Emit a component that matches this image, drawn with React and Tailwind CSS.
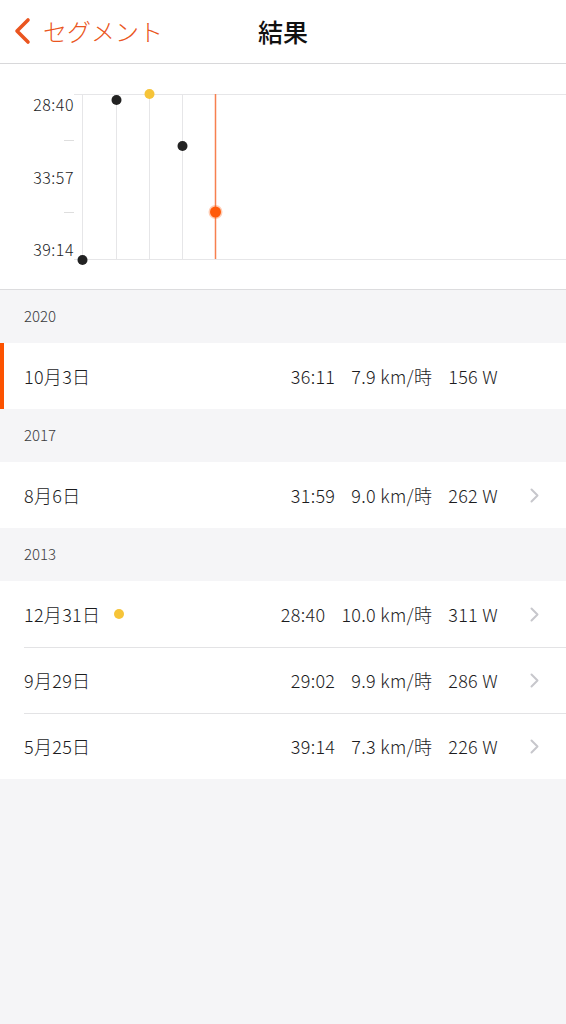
import React from 'react';

const FONT_STACK = '"Noto Sans CJK JP", "Noto Sans", sans-serif';
const FONT = { fontFamily: FONT_STACK };

const sections = [
    {
        year: '2020',
        rows: [{ date: '10月3日', time: '36:11', speed: '7.9 km/時', power: '156 W', current: true }],
    },
    {
        year: '2017',
        rows: [{ date: '8月6日', time: '31:59', speed: '9.0 km/時', power: '262 W' }],
    },
    {
        year: '2013',
        rows: [
            { date: '12月31日', time: '28:40', speed: '10.0 km/時', power: '311 W', best: true },
            { date: '9月29日', time: '29:02', speed: '9.9 km/時', power: '286 W' },
            { date: '5月25日', time: '39:14', speed: '7.3 km/時', power: '226 W' },
        ],
    },
];

// chart points, oldest first
const points = [
    { x: 82, y: 196, color: '#222222' },
    { x: 116, y: 36, color: '#222222' },
    { x: 149, y: 30, color: '#f6c438' },
    { x: 182, y: 82, color: '#222222' },
];

const Chart = () => (
    <div className="bg-white border-b border-[#dcdcde]">
        <svg width="566" height="225" viewBox="0 0 566 225" className="block">
            {/* grid */}
            <rect x="74" y="30" width="492" height="1" fill="#e6e6e8" />
            <rect x="74" y="195" width="492" height="1" fill="#e6e6e8" />
            <rect x="64" y="76" width="10" height="1" fill="#dedede" />
            <rect x="64" y="148" width="10" height="1" fill="#dedede" />
            {[82, 116, 149, 182].map(x => (
                <rect key={x} x={x} y="30" width="1" height="165" fill="#e6e6e8" />
            ))}
            <rect x="214.75" y="30" width="1.5" height="165" fill="#f7804f" />

            {/* labels */}
            {[
                ['28:40', 40],
                ['33:57', 113],
                ['39:14', 185],
            ].map(([label, y]) => (
                <text
                    key={label}
                    x="74"
                    y={y}
                    fontFamily={FONT_STACK}
                    fontSize="16"
                    fontWeight="300"
                    letterSpacing="0.5"
                    fill="#1c1c1e"
                    textAnchor="end"
                    dominantBaseline="central"
                >
                    {label}
                </text>
            ))}

            {/* dots */}
            {points.map(p => (
                <circle key={p.x} cx={p.x + 0.5} cy={p.y} r="5" fill={p.color} />
            ))}
            <circle cx="215.5" cy="148" r="7" fill="#ff5a0a" opacity="0.3" />
            <circle cx="215.5" cy="148" r="5.5" fill="#ff5a0a" />
        </svg>
    </div>
);

const Chevron = () => (
    <svg width="9" height="15" viewBox="0 0 9 15">
        <path d="M1.5 1.5 L7.5 7.5 L1.5 13.5" fill="none" stroke="#c7c7cc" strokeWidth="2" strokeLinecap="round" strokeLinejoin="round" />
    </svg>
);

const Row = ({ row, divider }) => (
    <div className="relative bg-white h-[66px] flex items-center pl-6 pr-[27px]">
        {row.current && <div className="absolute left-0 top-0 bottom-0 w-1 bg-[#fc5200]" />}
        {divider && <div className="absolute left-6 right-0 top-0 h-px bg-[#e3e3e5]" />}
        <div className="flex items-center text-[18px] font-light tracking-[0.3px] text-[#1c1c1e]">
            {row.date}
            {row.best && <span className="ml-[14px] w-[10px] h-[10px] rounded-full bg-[#f6c438]" />}
        </div>
        <div className="flex-1 flex justify-end items-center gap-4 text-[18px] font-light tracking-[0.3px] text-[#1c1c1e]">
            <span>{row.time}</span>
            <span>{row.speed}</span>
            <span>{row.power}</span>
        </div>
        <div className="w-[41px] flex justify-end">
            {!row.current && <Chevron />}
        </div>
    </div>
);

export default function App() {
    return (
        <div className="min-h-[1024px] bg-[#f5f5f7]" style={FONT}>
            {/* Nav bar */}
            <div className="relative h-16 bg-white border-b border-[#d8d8da] flex items-center">
                <div className="flex items-center pl-[13px] pb-[1px] text-[#ea5520]">
                    <svg width="20" height="28" viewBox="0 0 20 28">
                        <path d="M15 3 L4 14 L15 25" fill="none" stroke="#ea5520" strokeWidth="3.6" strokeLinecap="round" strokeLinejoin="round" />
                    </svg>
                    <span className="ml-[10px] text-[24px] font-light leading-none">セグメント</span>
                </div>
                <div className="absolute inset-0 flex items-center justify-center pb-[1px] pointer-events-none">
                    <span className="text-[25px] font-medium text-[#111111] leading-none">結果</span>
                </div>
            </div>

            <Chart />

            {sections.map(section => (
                <div key={section.year}>
                    <div className="h-[53px] flex items-center px-6 text-[15px] font-light text-[#3a3a3c]">
                        {section.year}
                    </div>
                    {section.rows.map((row, i) => (
                        <Row key={row.date} row={row} divider={i > 0} />
                    ))}
                </div>
            ))}
        </div>
    );
}
